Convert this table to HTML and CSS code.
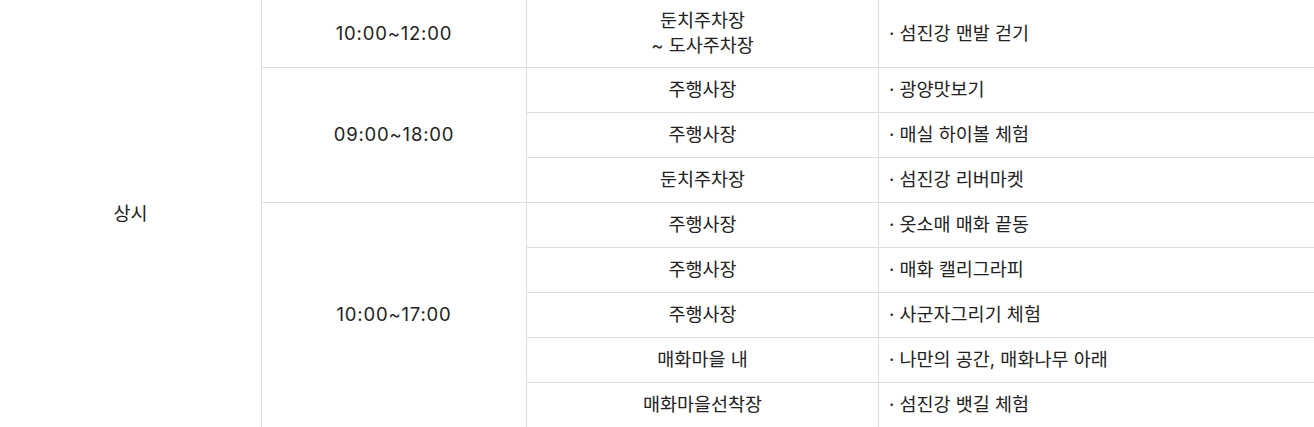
FILE: index.html
```html
<!DOCTYPE html>
<html lang="ko">

<head>
    <meta charset="UTF-8">
    <title>행사 일정</title>
    <link rel="stylesheet" href="styles.css">
</head>

<body>
    <table class="schedule">
        <colgroup>
            <col class="col-period">
            <col class="col-time">
            <col class="col-place">
            <col class="col-program">
        </colgroup>
        <tbody>
            <tr>
                <td rowspan="9">상시</td>
                <td class="time">10:00~12:00</td>
                <td>둔치주차장<br>~ 도사주차장</td>
                <td class="program">· 섬진강 맨발 걷기</td>
            </tr>
            <tr>
                <td class="time" rowspan="3">09:00~18:00</td>
                <td>주행사장</td>
                <td class="program">· 광양맛보기</td>
            </tr>
            <tr>
                <td>주행사장</td>
                <td class="program">· 매실 하이볼 체험</td>
            </tr>
            <tr>
                <td>둔치주차장</td>
                <td class="program">· 섬진강 리버마켓</td>
            </tr>
            <tr>
                <td class="time" rowspan="5">10:00~17:00</td>
                <td>주행사장</td>
                <td class="program">· 옷소매 매화 끝동</td>
            </tr>
            <tr>
                <td>주행사장</td>
                <td class="program">· 매화 캘리그라피</td>
            </tr>
            <tr>
                <td>주행사장</td>
                <td class="program">· 사군자그리기 체험</td>
            </tr>
            <tr>
                <td>매화마을 내</td>
                <td class="program">· 나만의 공간, 매화나무 아래</td>
            </tr>
            <tr>
                <td>매화마을선착장</td>
                <td class="program">· 섬진강 뱃길 체험</td>
            </tr>
        </tbody>
    </table>
</body>

</html>
```

FILE: styles.css
```css
body {
    margin: 0;
    font-family: Inter, "Noto Sans CJK KR", sans-serif;
    color: #222;
    background: #fff;
}

.schedule {
    width: 1316px;
    border-collapse: collapse;
    table-layout: fixed;
    margin-left: -1px;
}

.col-period {
    width: 262px;
}

.col-time {
    width: 265px;
}

.col-place {
    width: 352px;
}

.schedule tr {
    height: 45px;
}

.schedule td {
    border: 1px solid #ddd;
    padding: 8px 10px 9px;
    font-size: 18.5px;
    line-height: 25px;
    text-align: center;
    vertical-align: middle;
}

.schedule tr:first-child td {
    border-top: none;
}

.schedule td.time {
    letter-spacing: 0.8px;
}

.schedule td.program {
    text-align: left;
}
```
